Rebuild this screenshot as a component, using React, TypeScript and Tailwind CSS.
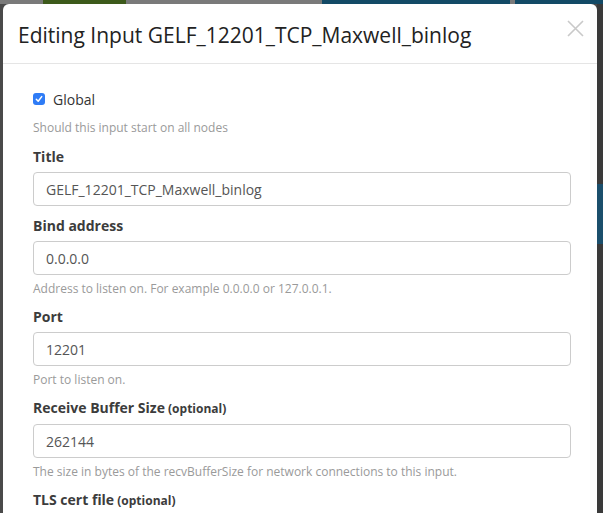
import React from "react";

const font = { fontFamily: '"Open Sans", "Liberation Sans", sans-serif' };

function Field({
  label,
  optional,
  value,
  help,
}: {
  label: string;
  optional?: boolean;
  value: string;
  help?: string;
}) {
  return (
    <div className={help ? "mb-[13px]" : "mb-[12px]"}>
      <div className="text-[14px] leading-[16px] font-bold text-[#3c3c3c] mb-[7px]">
        {label}
        {optional && <span className="text-[12px] font-bold"> (optional)</span>}
      </div>
      <div className="h-[34px] border border-[#cccccc] rounded-[4px] bg-white flex items-center px-[12px] text-[14px] text-[#555]">
        {value}
      </div>
      {help && (
        <div className="mt-[7px] text-[12px] leading-[14px] text-[#9a9a9a]">{help}</div>
      )}
    </div>
  );
}

export default function App() {
  return (
    <div className="w-[603px] h-[513px] overflow-hidden bg-[#4a4a4a] flex flex-col" style={font}>
      <div className="h-[4px] flex shrink-0">
        <div className="w-[43px] bg-[#7a7a7a]" />
        <div className="w-[83px] bg-[#3d5a1b]" />
        <div className="w-[196px] bg-[#7a7a7a]" />
        <div className="w-[188px] bg-[#134a66]" />
        <div className="w-[5px] bg-[#7a7a7a]" />
        <div className="flex-1 bg-[#134a66]" />
      </div>
      <div className="flex flex-1">
        <div className="w-[3px] bg-[#4a4a4a]" />
        <div className="w-[594px] bg-white rounded-t-[6px] flex flex-col">
          <div className="h-[60px] border-b border-[#e5e5e5] flex items-center justify-between pl-[15px] pr-[13px] pt-[4px]">
            <div className="text-[21px] text-[#222]">
              Editing Input GELF_12201_TCP_Maxwell_binlog
            </div>
            <svg width="17" height="17" viewBox="0 0 17 17" className="mb-[14px]">
              <path d="M1 1 L16 16 M16 1 L1 16" stroke="#c9c9c9" strokeWidth="1.6" />
            </svg>
          </div>
          <div className="pl-[30px] pr-[26px] pt-[25px]">
            <div className="flex items-center h-[20px] gap-[8px]">
              <div className="w-[12px] h-[12px] rounded-[3px] bg-[#2f7cf6] flex items-center justify-center">
                <svg width="8" height="8" viewBox="0 0 8 8">
                  <path d="M1.3 4.3 L3.2 6.2 L6.7 1.6" stroke="white" strokeWidth="1.5" fill="none" strokeLinecap="round" strokeLinejoin="round" />
                </svg>
              </div>
              <span className="text-[14px] text-[#333]">Global</span>
            </div>
            <div className="mt-[12px] text-[12px] leading-[14px] text-[#9a9a9a]">
              Should this input start on all nodes
            </div>
            <div className="mt-[14px]">
              <Field label="Title" value="GELF_12201_TCP_Maxwell_binlog" />
              <Field
                label="Bind address"
                value="0.0.0.0"
                help="Address to listen on. For example 0.0.0.0 or 127.0.0.1."
              />
              <Field label="Port" value="12201" help="Port to listen on." />
              <Field
                label="Receive Buffer Size"
                optional
                value="262144"
                help="The size in bytes of the recvBufferSize for network connections to this input."
              />
              <div className="text-[14px] leading-[16px] font-bold text-[#3c3c3c]">
                TLS cert file<span className="text-[12px] font-bold"> (optional)</span>
              </div>
            </div>
          </div>
        </div>
        <div className="flex-1 bg-[#3a3a3a] flex flex-col">
          <div className="h-[180px]" />
          <div className="h-[60px] bg-[#1b4f6c]" />
        </div>
      </div>
    </div>
  );
}
